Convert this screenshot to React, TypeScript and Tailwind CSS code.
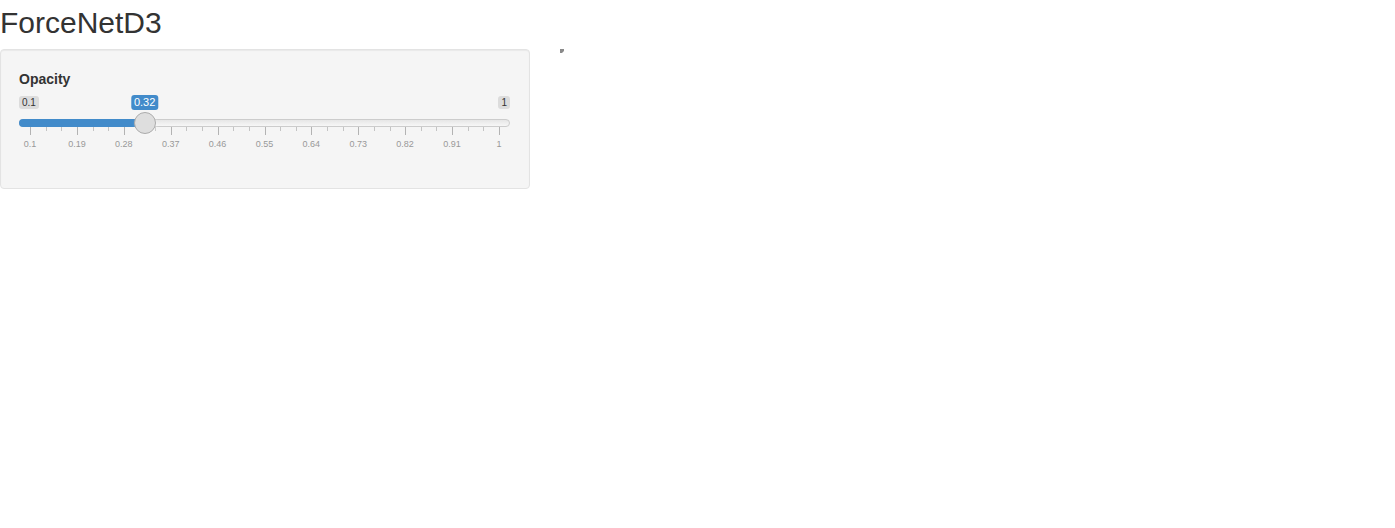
import React from "react";

const MIN = 0.1;
const MAX = 1;
const VALUE = 0.32;
const WIDTH = 491;
const HANDLE = 22;
const INNER = WIDTH - HANDLE;

const majors = ["0.1", "0.19", "0.28", "0.37", "0.46", "0.55", "0.64", "0.73", "0.82", "0.91", "1"];

function Ticks() {
  const lines: React.ReactNode[] = [];
  for (let i = 0; i < majors.length; i++) {
    const x = Math.round(HANDLE / 2 + (i / 10) * INNER) + 0.5;
    lines.push(<line key={"M" + i} x1={x} x2={x} y1={0} y2={8} stroke="#b3b3b3" strokeWidth={1} />);
    if (i < majors.length - 1) {
      for (let k = 1; k < 3; k++) {
        const mx = Math.round(HANDLE / 2 + (i / 10) * INNER + (k / 3) * (INNER / 10)) + 0.5;
        lines.push(<line key={"m" + i + k} x1={mx} x2={mx} y1={0} y2={4} stroke="#c4c4c4" strokeWidth={1} />);
      }
    }
  }
  return (
    <svg width={WIDTH} height={8} className="block">
      {lines}
    </svg>
  );
}

function Slider() {
  const pct = (VALUE - MIN) / (MAX - MIN);
  const center = HANDLE / 2 + pct * INNER;
  return (
    <div className="w-[491px] flex flex-col">
      <div className="relative flex justify-between items-start h-[25px] pt-[2px]">
        <span className="px-[3px] text-[10px] leading-[13px] text-[#333] bg-black/10 rounded-[3px]">0.1</span>
        <span
          className="absolute top-[1px] -translate-x-1/2 px-[3px] py-[1px] text-[11px] leading-[13px] text-white bg-[#428bca] rounded-[3px]"
          style={{ left: center }}
        >
          0.32
        </span>
        <span className="px-[3px] text-[10px] leading-[13px] text-[#333] bg-black/10 rounded-[3px]">1</span>
      </div>
      <div className="relative h-[8px] border border-[#cccccc] rounded-[8px] bg-[linear-gradient(to_bottom,#dedede_-50%,#ffffff_150%)]">
        <div
          className="absolute -left-px -top-px h-[8px] bg-[#428bca] rounded-l-[8px]"
          style={{ width: center }}
        />
        <div
          className="absolute -top-[8px] w-[22px] h-[22px] rounded-full border border-[#ababab] bg-[#dedede] shadow-[1px_1px_3px_rgba(255,255,255,0.3)]"
          style={{ left: center - HANDLE / 2 - 1 }}
        />
      </div>
      <Ticks />
      <div className="flex justify-between px-[11px] pt-[4px]">
        {majors.map((m) => (
          <span key={m} className="w-0 flex justify-center text-[9px] leading-[11px] text-[#999999] whitespace-nowrap">
            {m}
          </span>
        ))}
      </div>
    </div>
  );
}

export default function App() {
  return (
    <div className="w-[1395px] h-[528px] bg-white text-[#333333] font-['Liberation_Sans',Arial,sans-serif]">
      <h2 className="text-[30px] leading-[33px] pt-[6px] mb-[10px] font-normal">ForceNetD3</h2>
      <div className="flex items-start">
        <div className="w-[530px] h-[140px] bg-[#f5f5f5] border border-[#e3e3e3] rounded pt-[19px] pb-[19px] pl-[18px] pr-[19px] shadow-[inset_0_1px_1px_rgba(0,0,0,0.05)]">
          <label className="block font-bold text-[14px] leading-[20px] mb-[5px]">Opacity</label>
          <Slider />
        </div>
        <svg className="ml-[30px]" width="6" height="6" viewBox="0 0 6 6">
          <polygon points="0,0 4,0 4,2 2,4 0,4" fill="#8a8a8a" />
        </svg>
      </div>
    </div>
  );
}
